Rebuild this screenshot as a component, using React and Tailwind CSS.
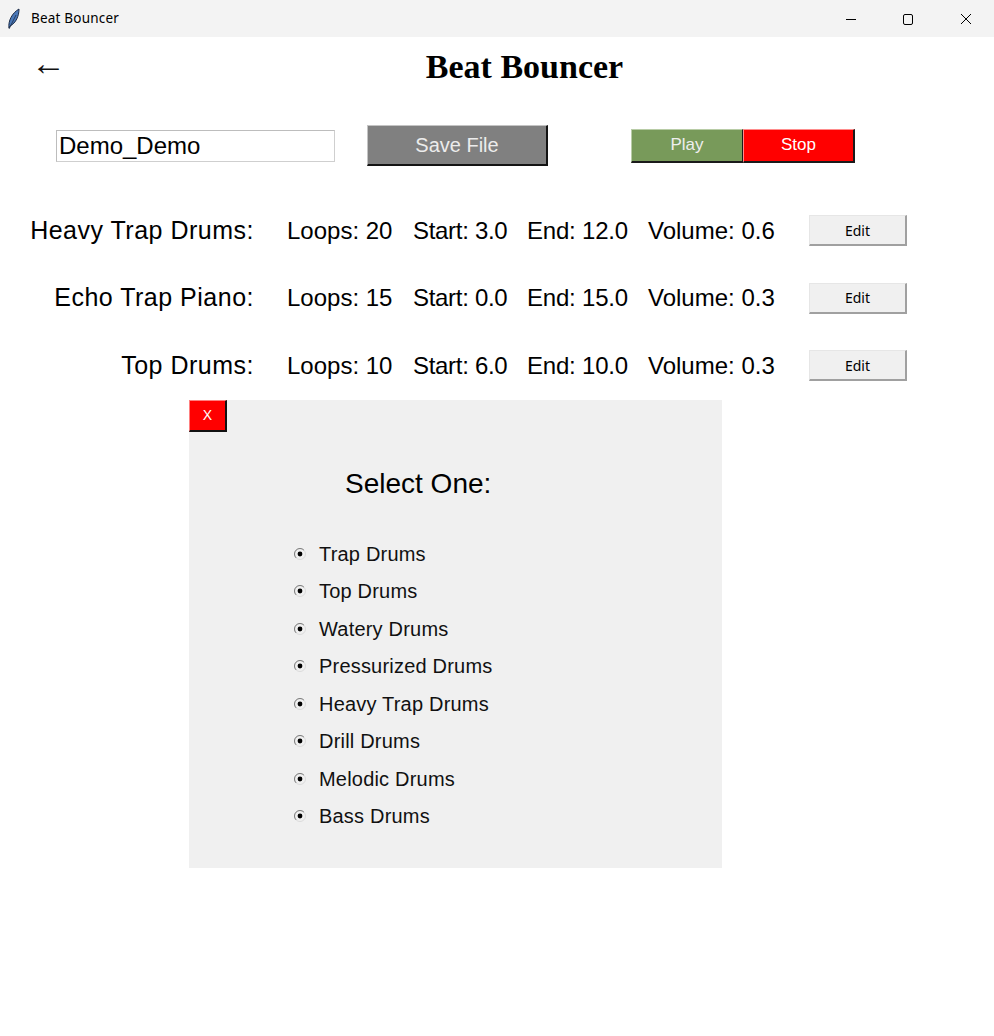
import React from 'react';

const tracks = [
  { name: 'Heavy Trap Drums:', loops: 20, start: '3.0', end: '12.0', volume: '0.6' },
  { name: 'Echo Trap Piano:', loops: 15, start: '0.0', end: '15.0', volume: '0.3' },
  { name: 'Top Drums:', loops: 10, start: '6.0', end: '10.0', volume: '0.3' },
];

const options = [
  'Trap Drums',
  'Top Drums',
  'Watery Drums',
  'Pressurized Drums',
  'Heavy Trap Drums',
  'Drill Drums',
  'Melodic Drums',
  'Bass Drums',
];

function TitleBar() {
  return (
    <div className="h-[37px] bg-[#f3f3f3] flex items-center relative">
      <svg width="14" height="22" viewBox="0 0 14 22" className="ml-[7px]">
        <path d="M2 20 C1 13, 5 5, 12 1 C12 8, 9 15, 3 18 Z" fill="#4a78b8" stroke="#1c2c48" strokeWidth="1" />
        <path d="M2 21 L9 7" stroke="#1c2c48" strokeWidth="0.8" />
      </svg>
      <span className="ml-[10px] text-[13.5px] tracking-[0.2px] text-black font-['Noto_Sans',sans-serif]">Beat Bouncer</span>
      <div className="ml-auto flex items-center h-full">
        <svg width="12" height="12" viewBox="0 0 12 12" className="mr-[45px]">
          <path d="M1 6.5 H11" stroke="#000" strokeWidth="1" />
        </svg>
        <svg width="12" height="12" viewBox="0 0 12 12" className="mr-[46px]">
          <rect x="1.5" y="1.5" width="9" height="10" rx="1.5" fill="none" stroke="#000" strokeWidth="1" />
        </svg>
        <svg width="12" height="12" viewBox="0 0 12 12" className="mr-[22px]">
          <path d="M1 1 L11 11 M11 1 L1 11" stroke="#000" strokeWidth="1" />
        </svg>
      </div>
    </div>
  );
}

function Radio() {
  return (
    <svg width="14" height="14" viewBox="0 0 14 14">
      <circle cx="7" cy="7" r="5.5" fill="none" stroke="#dcdcdc" strokeWidth="1" />
      <path d="M3.1 10.9 A5.5 5.5 0 0 1 10.9 3.1" fill="none" stroke="#7c7c7c" strokeWidth="1" />
      <circle cx="7" cy="7" r="2.4" fill="#000" />
    </svg>
  );
}

function App() {
  return (
    <div className="w-[994px] h-[1036px] bg-white overflow-hidden font-['Liberation_Sans',Arial,sans-serif] text-black">
      <TitleBar />

      <header className="h-[60px] flex items-center">
        <div className="w-[64px] pl-[31px] pb-[8px] text-[35px] leading-none font-['Liberation_Serif',serif] text-[#111]">←</div>
        <h1 className="flex-1 pr-[9px] text-center text-[34px] font-bold font-['Liberation_Serif',serif] leading-none">
          Beat Bouncer
        </h1>
      </header>

      <div className="mt-[28px] h-[41px] flex items-center">
        <div className="ml-[56px] w-[279px] h-[32px] border border-[#cfcfcf] border-t-[#bdbdbd] border-l-[#bdbdbd] bg-white flex items-center pl-[2px] text-[24px]">
          Demo_Demo
        </div>
        <button className="ml-[32px] w-[181px] h-[41px] bg-[#808080] text-[#ececec] text-[20px] border-t border-l border-t-[#c4c4c4] border-l-[#c4c4c4] border-b-2 border-r-2 border-b-[#141414] border-r-[#141414]">
          Save File
        </button>
        <div className="ml-[83px] flex">
          <button className="w-[112px] h-[34px] bg-[#789a5a] text-[#eeeeee] text-[17px] border-t border-l border-t-[#b8cca6] border-l-[#b8cca6] border-b-2 border-r border-b-[#1a1a1a] border-r-[#1a1a1a]">
            Play
          </button>
          <button className="w-[112px] h-[34px] bg-[#ff0000] text-white text-[17px] border-t border-l border-t-[#ff8c8c] border-l-[#ff8c8c] border-b-2 border-r-2 border-b-[#1a1a1a] border-r-[#1a1a1a]">
            Stop
          </button>
        </div>
      </div>

      <div className="mt-[49px] flex flex-col gap-[36.5px]">
        {tracks.map((t) => (
          <div key={t.name} className="h-[31px] flex items-center text-[24px] whitespace-nowrap">
            <div className="w-[254px] text-right text-[25px] tracking-[0.5px]">{t.name}</div>
            <div className="ml-[33px] w-[106px]">Loops: {t.loops}</div>
            <div className="ml-[20px] w-[94px] tracking-[-0.3px]">Start: {t.start}</div>
            <div className="ml-[20px] w-[101px] tracking-[-0.2px]">End: {t.end}</div>
            <div className="ml-[20px] w-[126px]">Volume: {t.volume}</div>
            <button className="ml-[35px] w-[98px] h-[31px] bg-[#f0f0f0] text-[14px] text-black font-['Noto_Sans',sans-serif] border-t border-l border-t-[#e6e6e6] border-l-[#e6e6e6] border-b-2 border-r-2 border-b-[#a0a0a0] border-r-[#a0a0a0]">
              Edit
            </button>
          </div>
        ))}
      </div>

      <div className="mt-[19px] ml-[189px] w-[533px] h-[468px] bg-[#f0f0f0] flex flex-col">
        <button className="w-[38px] h-[32px] bg-[#ff0000] text-white text-[14px] border-t border-l border-t-[#ff8080] border-l-[#ff8080] border-b-2 border-r-2 border-b-[#111] border-r-[#111]">
          X
        </button>
        <div className="mt-[36px] ml-[156px] text-[28px] leading-[32px]">Select One:</div>
        <div className="mt-[35px] ml-[104px] flex flex-col">
          {options.map((o) => (
            <label key={o} className="h-[37.5px] flex items-center text-[20px] text-[#111]">
              <Radio />
              <span className="ml-[12px] tracking-[0.2px]">{o}</span>
            </label>
          ))}
        </div>
      </div>
    </div>
  );
}

export default App;
